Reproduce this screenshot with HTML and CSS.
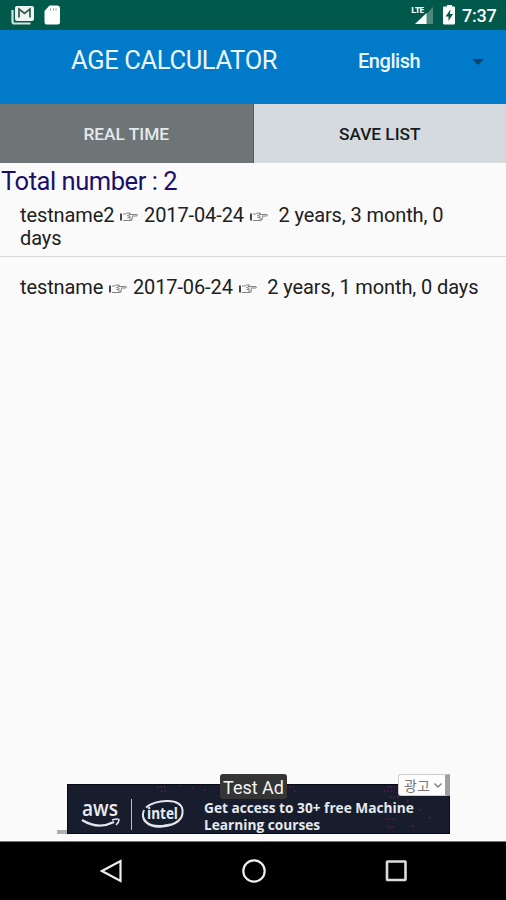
FILE: index.html
```
<!DOCTYPE html>
<html lang="en">
<head>
    <meta charset="UTF-8">
    <meta name="viewport" content="width=device-width, initial-scale=1.0">
    <title>Age Calculator</title>
    <link rel="stylesheet" href="styles.css">
</head>
<body>
    <div class="status-bar">
        <svg class="status-left" viewBox="0 0 56 30" width="56" height="30">
            <path d="M1.500 10v11.500q0 2 2 2h16" fill="none" stroke="#d5e4df" stroke-width="2.200"/>
            <rect x="4" y="6" width="19" height="15" rx="2" fill="#eef4f1"/>
            <path d="M8 17.500V9l5.500 4.500L19 9v8.500" fill="none" stroke="#36584e" stroke-width="1.700"/>
            <path d="M38.500 5.500H46q3 0 3 3V22q0 2.500-2.500 2.500h-11Q33.500 24.500 33.500 22V11z" fill="#fff"/>
            <path d="M39.500 8.500v2M42.500 8.500v2M45 8.500v2" stroke="#71968b"/>
        </svg>
        <div class="status-right">
            <span class="lte">LTE</span>
            <svg viewBox="0 0 48 30" width="48" height="30">
                <path d="M24 7v17H8z" fill="#4c8a7c"/>
                <path d="M17.500 13v11H6z" fill="#fff"/>
                <path d="M35 6.500h3V5h5v1.500h2q1 0 1 1V23q0 1.500-1.500 1.500h-9Q34 24.500 34 23V7.500q0-1 1-1z" fill="#fff"/>
                <path d="M41.500 9.500l-5 7h3V21l4.500-7h-3z" fill="#00594b"/>
            </svg>
            <span class="time">7:37</span>
        </div>
    </div>
    <div class="header">
        <h1>AGE CALCULATOR</h1>
        <div class="language">English</div>
        <svg class="arrow" viewBox="0 0 12 6" width="12" height="6"><path d="M0 0h12L6 6z" fill="#07436d"/></svg>
    </div>
    <div class="tabs">
        <div class="tab active">REAL TIME</div>
        <div class="tab">SAVE LIST</div>
    </div>
    <svg class="defs" width="0" height="0">
        <symbol id="hand" viewBox="0 0 18 10">
            <path d="M1 1.500v7" stroke="#444" stroke-width="2"/>
            <path d="M3 2h2.500l2-1h3L9 2.500h8q1 1 0 1.500h-5M5 8.500h6q2-.500 1-1.800 1.500-1 0-1.500 1-.700 0-1.200M3 8.500h3M7 3.500l3 .5v1.500H7.500M9 7h3" fill="none" stroke="#777" stroke-width=".9"/>
        </symbol>
    </svg>
    <div class="content">
        <div class="total">Total number : 2</div>
        <div class="item first">testname2 <svg class="hand"><use href="#hand"/></svg> 2017-04-24 <svg class="hand"><use href="#hand"/></svg>&nbsp; 2 years, 3 month, 0<br>days</div>
        <div class="item">testname <svg class="hand"><use href="#hand"/></svg> 2017-06-24 <svg class="hand"><use href="#hand"/></svg>&nbsp; 2 years, 1 month, 0 days</div>
    </div>
    <div class="ad">
        <svg class="ad-dots" viewBox="0 0 383 50" width="383" height="50">
            <path d="M90 3h8M94 7h5M112 2h3M125 4h2M137 6h3M154 2h2M222 3h5M227 7h2M320 3h8M317 7h11M323 13h9M321 20h4M315 29h5M319 35h10M321 43h5M340 17h2M352 26h2M362 34h2M345 42h3" stroke="#9a1c66" stroke-width="1.500" stroke-dasharray="1.500 2" opacity=".6"/>
        </svg>
        <svg class="logos" viewBox="0 0 137 50" width="137" height="50">
            <text x="15" y="32" class="aws" textLength="36" lengthAdjust="spacingAndGlyphs">aws</text>
            <path d="M15 36q16 10 32 2" fill="none" stroke="#e2e5eb" stroke-width="2.300"/>
            <path d="M45 36q7-2 7 0t-3 5" fill="none" stroke="#e2e5eb" stroke-width="1.600"/>
            <path d="M64.500 15v31" stroke="#b9bec8"/>
            <path d="M79 23.500C90 15 114 14 115.500 26c1 10-8 15-20 16.500C81 44 73 36 77 26" fill="none" stroke="#e2e5eb" stroke-width="2"/>
            <path d="M77 26c-3 14 12 18 27 13-9 7-31 5-27-13z" fill="#e2e5eb"/>
            <text x="80" y="35" class="intel" textLength="31" lengthAdjust="spacingAndGlyphs">intel</text>
        </svg>
        <div class="ad-text">Get access to 30+ free Machine<br>Learning courses</div>
        <div class="test-label">Test Ad</div>
        <div class="ad-choice">광고<svg viewBox="0 0 8 5" width="8" height="5"><path d="M.5.500L4 4 7.500.500" fill="none" stroke="#777" stroke-width="1.300"/></svg></div>
    </div>
    <div class="nav">
        <svg viewBox="0 0 22 24" width="22" height="24"><path d="M20.500 2v20L2 12z" fill="none" stroke="#eee" stroke-width="2.200"/></svg>
        <svg viewBox="0 0 24 24" width="24" height="24"><circle cx="12" cy="12" r="10.700" fill="none" stroke="#eee" stroke-width="2.200"/></svg>
        <svg viewBox="0 0 22 24" width="22" height="24"><rect x="2" y="2.500" width="18.500" height="18.500" rx=".5" fill="none" stroke="#ddd" stroke-width="2.600"/></svg>
    </div>
</body>
</html>
```
FILE: styles.css
```
* { box-sizing: border-box; }
body {
    margin: 0;
    height: 900px;
    display: flex;
    flex-direction: column;
    overflow: hidden;
    font-family: Roboto, sans-serif;
    background: #fafafa;
}
svg { display: block; flex: none; }
.status-bar {
    height: 30px;
    display: flex;
    justify-content: space-between;
    padding: 0 9px 0 11px;
    background: #00594b;
    color: white;
}
.status-right { display: flex; }
.lte {
    width: 0;
    padding-top: 5px;
    margin-left: 2px;
    margin-right: -2px;
    font: bold 9px/10px "Open Sans", sans-serif;
    letter-spacing: -1px;
}
.time {
    margin-left: 5px;
    width: 35px;
    font-size: 18px;
    font-weight: 500;
    line-height: 32px;
    letter-spacing: -0.2px;
    white-space: nowrap;
}
.header {
    height: 74px;
    display: flex;
    padding-left: 71px;
    background: #007ac9;
    color: #edf7ff;
}
h1 {
    width: 287px;
    margin: 0;
    font-size: 25.5px;
    font-weight: 400;
    line-height: 60px;
    letter-spacing: -0.35px;
    white-space: nowrap;
}
.language {
    width: 114px;
    font-size: 20px;
    font-weight: 500;
    line-height: 63px;
    letter-spacing: -0.45px;
}
.arrow { margin-top: 29px; }
.tabs {
    height: 59px;
    display: flex;
}
.tab {
    flex: 1;
    background: #d5dade;
    color: #171b1e;
    font-size: 17.3px;
    font-weight: 500;
    line-height: 60px;
    text-align: center;
}
.tab.active {
    background: #6e7577;
    color: #e4eaec;
    border-right: 1px solid #555c60;
}
.defs { position: absolute; }
.content { flex: 1; color: #202020; }
.total {
    height: 36px;
    padding-left: 1px;
    font-size: 25.5px;
    line-height: 36px;
    letter-spacing: -0.45px;
    color: #1b0f6b;
}
.item {
    padding: 19px 20px;
    font-size: 20px;
    line-height: 23px;
    letter-spacing: -0.11px;
    white-space: nowrap;
}
.item.first {
    height: 58px;
    padding-top: 5px;
    border-bottom: 1px solid #d9d9d9;
}
.hand {
    display: inline-block;
    width: 18px;
    height: 10px;
    margin: 0 1px;
}
.ad {
    position: relative;
    width: 383px;
    height: 50px;
    margin: 0 0 7px 67px;
    display: flex;
    background: #171d2c;
    border: 1px solid #070b16;
}
.ad::before {
    content: "";
    position: absolute;
    left: -11px;
    bottom: -1px;
    width: 10px;
    height: 4px;
    background: #b0b0b0;
}
.ad-dots { position: absolute; left: -1px; top: -1px; }
.logos { margin: -1px 0 0 -1px; }
.aws { font: 600 22px "Open Sans", sans-serif; fill: #e8ebf0; }
.intel { font: bold 16px "Open Sans", sans-serif; fill: #e8ebf0; }
.ad-text {
    padding-top: 14px;
    font: bold 13.7px/17px "Open Sans", sans-serif;
    color: #e6e9f0;
    white-space: nowrap;
}
.test-label {
    position: absolute;
    left: 152px;
    top: -11px;
    width: 67px;
    height: 25px;
    border-radius: 3px;
    background: #353535;
    color: #f4f4f4;
    font-size: 18px;
    line-height: 27px;
    text-align: center;
}
.ad-choice {
    position: absolute;
    right: -1px;
    top: -11px;
    width: 52px;
    height: 22px;
    display: flex;
    align-items: center;
    gap: 4px;
    padding-left: 5px;
    border: 1px solid #ccc;
    border-right: 5px solid #a0a0a0;
    border-radius: 3px 0 0 3px;
    background: white;
    color: #777;
    font: 14px "Noto Sans CJK KR", sans-serif;
}
.nav {
    height: 59px;
    display: flex;
    justify-content: space-between;
    padding: 17px 99px 0 100px;
    border-top: 1px solid #777;
    background: black;
}
```
